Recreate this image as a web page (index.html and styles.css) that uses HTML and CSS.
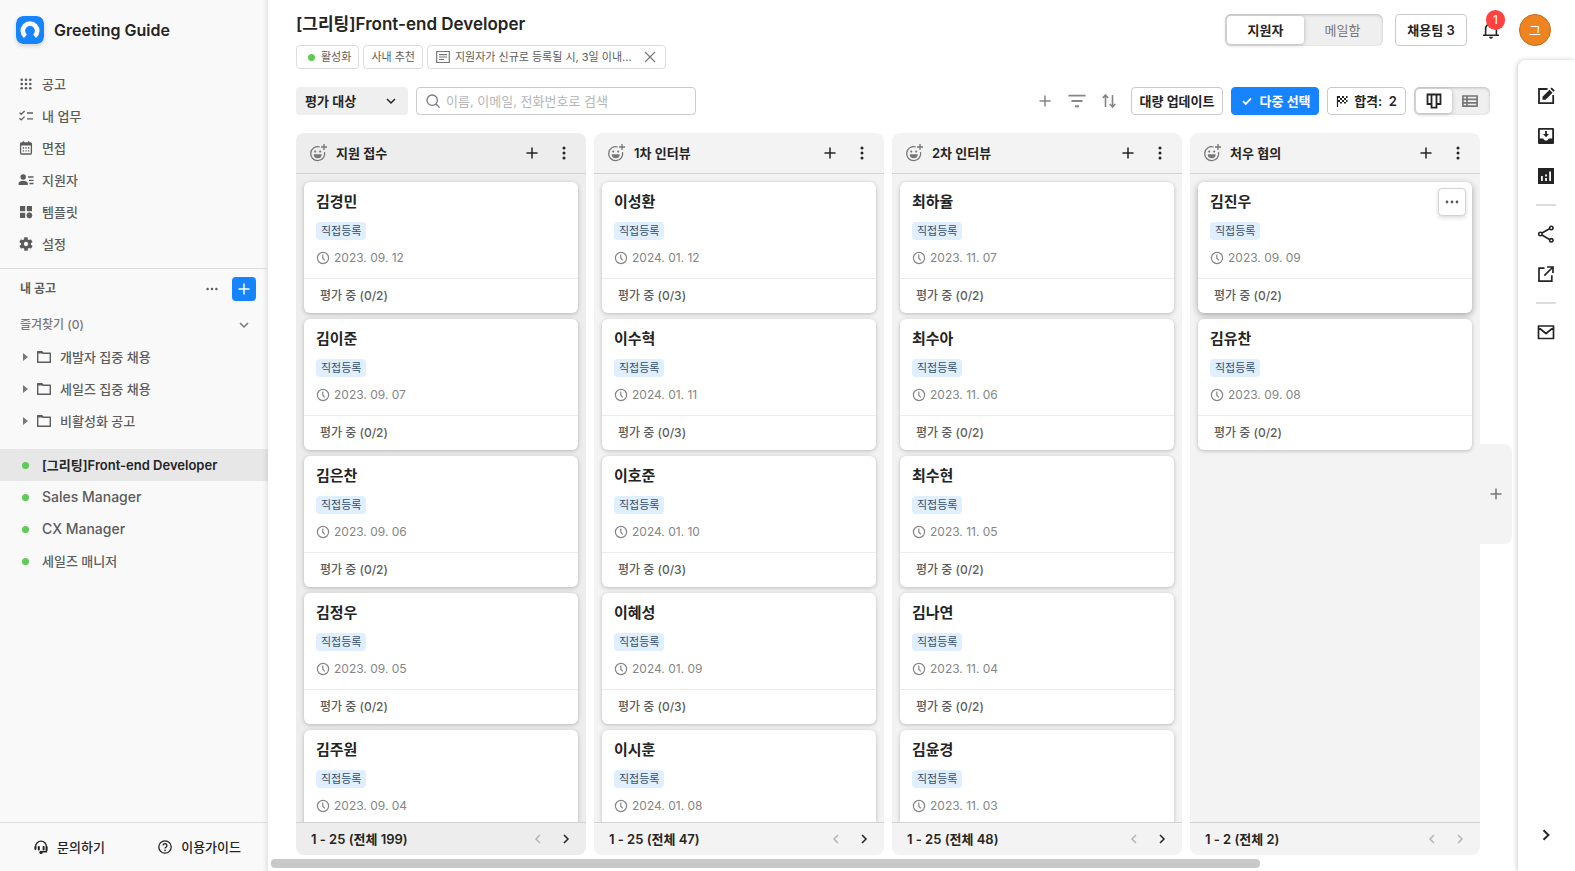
FILE: index.html
```html
<!DOCTYPE html>
<html lang="ko">
<head>
<meta charset="utf-8">
<meta name="viewport" content="width=device-width, initial-scale=1">
<title>[그리팅]Front-end Developer</title>
<link rel="stylesheet" href="styles.css">
</head>
<body>
<svg class="sprite" aria-hidden="true">
  <symbol id="i-plus" viewBox="0 0 16 16"><path d="M8 2.5v11M2.5 8h11" fill="none" stroke="currentColor" stroke-width="1.5"/></symbol>
  <symbol id="i-more" viewBox="0 0 16 16"><g fill="currentColor"><circle cx="3" cy="8" r="1.4"/><circle cx="8" cy="8" r="1.4"/><circle cx="13" cy="8" r="1.4"/></g></symbol>
  <symbol id="i-kebab" viewBox="0 0 16 16"><g fill="currentColor"><circle cx="8" cy="3" r="1.5"/><circle cx="8" cy="8" r="1.5"/><circle cx="8" cy="13" r="1.5"/></g></symbol>
  <symbol id="i-down" viewBox="0 0 16 16"><path d="M4 6l4 4 4-4" fill="none" stroke="currentColor" stroke-width="1.5"/></symbol>
  <symbol id="i-left" viewBox="0 0 16 16"><path d="M10 4L6 8l4 4" fill="none" stroke="currentColor" stroke-width="1.5"/></symbol>
  <symbol id="i-right" viewBox="0 0 16 16"><path d="M6 4l4 4-4 4" fill="none" stroke="currentColor" stroke-width="1.5"/></symbol>
  <symbol id="i-folder" viewBox="0 0 16 16"><path d="M1.7 13.3V2.7h4.1l1.4 1.5h7.1v9.1z" fill="none" stroke="currentColor" stroke-width="1.4" stroke-linejoin="round"/><path d="M1.5 2.5h4.6l1.5 2H1.5z" fill="currentColor"/></symbol>
  <symbol id="i-clock" viewBox="0 0 16 16"><g fill="none" stroke="currentColor" stroke-width="1.2"><circle cx="8" cy="8" r="5.6"/><path d="M7.8 4.6v3.6l2 2.2"/></g></symbol>
  <symbol id="i-smile" viewBox="0 0 20 20"><g fill="none" stroke="currentColor" stroke-width="1.3"><path d="M10.800 4A7 7 0 1 0 15.500 9"/><path d="M15 1v6M12 4h6"/></g><circle cx="6.2" cy="8.600" r="1.1" fill="currentColor"/><circle cx="11.200" cy="8.600" r="1.1" fill="currentColor"/><path d="M4.700 11.300h8a4 4 0 0 1-8 0z" fill="currentColor"/></symbol>
</svg>

<div class="app">
  <aside class="sidebar">
    <div class="brand">
      <svg class="brand-logo" viewBox="0 0 28 28" aria-hidden="true"><rect width="28" height="28" rx="7" fill="#1784ff"/><path d="M9.4 20.3A7.2 7.2 0 1 1 18.6 20.3" fill="none" stroke="#fff" stroke-width="4.6"/></svg>
      <span>Greeting Guide</span>
    </div>
    <nav class="menu">
      <a href="#"><svg class="icon" viewBox="0 0 16 16"><g fill="currentColor"><circle cx="3.7" cy="3.7" r="1.3"/><circle cx="8" cy="3.7" r="1.3"/><circle cx="12.3" cy="3.7" r="1.3"/><circle cx="3.7" cy="8" r="1.3"/><circle cx="8" cy="8" r="1.3"/><circle cx="12.3" cy="8" r="1.3"/><circle cx="3.7" cy="12.3" r="1.3"/><circle cx="8" cy="12.3" r="1.3"/><circle cx="12.3" cy="12.3" r="1.3"/></g></svg>공고</a>
      <a href="#"><svg class="icon" viewBox="0 0 16 16"><path d="M1.5 4.6l1.7 1.7L6.6 3M1.5 10.2l1.7 1.7 3.4-3.3M9 5h6M9 10.8h6" fill="none" stroke="currentColor" stroke-width="1.3"/></svg>내 업무</a>
      <a href="#"><svg class="icon" viewBox="0 0 16 16"><rect x="2.6" y="3" width="10.8" height="11" rx="1" fill="none" stroke="currentColor" stroke-width="1.3"/><path d="M2.5 3h11v2.6h-11zM4.6 1.2h1.5V3H4.6zM9.9 1.2h1.5V3H9.9z" fill="currentColor"/><path d="M4.8 8h6.6M4.8 10.8h6.6" stroke="currentColor" stroke-width="1.3" stroke-dasharray="1.3 1.3"/></svg>면접</a>
      <a href="#"><svg class="icon" viewBox="0 0 16 16"><circle cx="5.2" cy="5" r="2.7" fill="currentColor"/><path d="M.6 13v-1.5c0-1.8 2-2.8 4.6-2.8s4.6 1 4.6 2.8V13z" fill="currentColor"/><path d="M10 5h5.5M11 8.3h4.5M11.5 11.5h4" stroke="currentColor" stroke-width="1.3"/></svg>지원자</a>
      <a href="#"><svg class="icon" viewBox="0 0 16 16"><g fill="currentColor"><rect x="2" y="2" width="5.2" height="5.2"/><rect x="8.8" y="2" width="5.2" height="5.2"/><rect x="2" y="8.8" width="5.2" height="5.2"/><path d="M11.4 8.3l2.2 1 .7 2.1-.7 2.1-2.2 1-2.2-1-.7-2.1.7-2.1z"/></g></svg>템플릿</a>
      <a href="#"><svg class="icon" viewBox="0 0 24 24"><path fill="currentColor" d="M19.4 13c.04-.3.1-.6.1-1s0-.7-.1-1l2.1-1.6c.2-.2.3-.4.1-.7l-2-3.4c-.1-.2-.4-.3-.6-.2l-2.5 1c-.5-.4-1.1-.7-1.7-1L14.400 2.500c0-.3-.2-.5-.5-.5h-4c-.2 0-.4.200-.5.400L9 5.100c-.6.300-1.200.600-1.700 1l-2.500-1c-.2-.1-.5 0-.6.200l-2 3.400c-.1.300 0 .500.100.700L4.500 11c0 .300-.1.600-.1 1s0 .700.100 1l-2.100 1.600c-.2.200-.3.400-.1.700l2 3.400c.1.200.4.300.6.200l2.500-1c.5.400 1.100.7 1.700 1l.4 2.700c0 .2.200.4.500.4h4c.2 0 .4-.2.500-.4l.4-2.700c.6-.3 1.200-.6 1.700-1l2.500 1c.2.100.5 0 .6-.2l2-3.400c.1-.3 0-.5-.1-.7zM12 15.200a3.200 3.200 0 1 1 0-6.400 3.200 3.200 0 0 1 0 6.400z"/></svg>설정</a>
    </nav>
    <section class="postings">
      <div class="postings-head">
        <h2>내 공고</h2>
        <button class="ghost" aria-label="더보기"><svg class="icon"><use href="#i-more"/></svg></button>
        <button class="add" aria-label="공고 추가"><svg class="icon"><use href="#i-plus"/></svg></button>
      </div>
      <button class="favorites"><span>즐겨찾기 (0)</span><svg class="icon"><use href="#i-down"/></svg></button>
      <div class="folders">
        <a href="#"><i class="caret"></i><svg class="icon"><use href="#i-folder"/></svg>개발자 집중 채용</a>
        <a href="#"><i class="caret"></i><svg class="icon"><use href="#i-folder"/></svg>세일즈 집중 채용</a>
        <a href="#"><i class="caret"></i><svg class="icon"><use href="#i-folder"/></svg>비활성화 공고</a>
      </div>
      <div class="jobs">
        <a href="#" class="active"><i class="dot"></i>[그리팅]Front-end Developer</a>
        <a href="#"><i class="dot"></i>Sales Manager</a>
        <a href="#"><i class="dot"></i>CX Manager</a>
        <a href="#" class="ko"><i class="dot"></i>세일즈 매니저</a>
      </div>
    </section>
    <footer class="side-foot">
      <a href="#"><svg class="icon" viewBox="0 0 16 16"><g fill="none" stroke="currentColor" stroke-width="1.4"><path d="M2.600 8.500V7.500a5.400 5.400 0 0 1 10.800 0v5.300H9"/><circle cx="8" cy="13.400" r="1" fill="currentColor"/></g><rect x="1.400" y="7" width="2" height="4" rx="1" fill="currentColor"/><rect x="4.800" y="7" width="2" height="4.500" rx=".8" fill="currentColor"/><rect x="9.600" y="7" width="2" height="4.500" rx=".8" fill="currentColor"/><rect x="12.800" y="7" width="1.800" height="5" rx=".8" fill="currentColor"/></svg>문의하기</a>
      <a href="#"><svg class="icon" viewBox="0 0 16 16"><g fill="none" stroke="currentColor" stroke-width="1.3"><circle cx="8" cy="8" r="6.200"/><path d="M6.100 6.500a1.900 1.900 0 1 1 2.900 1.600c-.7.400-1 .7-1 1.500"/></g><circle cx="8" cy="11.400" r=".8" fill="currentColor"/></svg>이용가이드</a>
    </footer>
  </aside>

  <div class="page">
    <header class="heading">
      <h1>[그리팅]Front-end Developer</h1>
      <div class="tags">
        <span class="tag tag-state"><i class="dot"></i>활성화</span>
        <span class="tag">사내 추천</span>
        <span class="tag tag-note"><svg class="icon" viewBox="0 0 16 16"><path d="M1.700 2.500h12.600v11H1.700zM4 5.600h8M4 8h8M4 10.500h5" fill="none" stroke="currentColor" stroke-width="1.200"/></svg><span>지원자가 신규로 등록될 시, 3일 이내...</span><button aria-label="닫기"><svg class="icon" viewBox="0 0 16 16"><path d="M3 3l10 10M13 3L3 13" stroke="currentColor" stroke-width="1.200"/></svg></button></span>
      </div>
    </header>

    <div class="account">
      <div class="switch">
        <button class="on">지원자</button>
        <button>메일함</button>
      </div>
      <button class="btn btn-team">채용팀 3</button>
      <button class="bell" aria-label="알림"><svg class="icon-l" viewBox="0 0 20 20"><path d="M2 15.200h16M4.600 15V9a5.400 5.400 0 0 1 10.800 0v6M10 3.700V2" fill="none" stroke="currentColor" stroke-width="1.600"/><path d="M8 16.800h4a2 2 0 0 1-4 0z" fill="currentColor"/></svg><span class="badge">1</span></button>
      <button class="avatar">그</button>
    </div>

    <main class="main">
      <div class="toolbar">
        <button class="filter">평가 대상<svg class="icon"><use href="#i-down"/></svg></button>
        <label class="search"><svg class="icon" viewBox="0 0 16 16"><g fill="none" stroke="currentColor" stroke-width="1.300"><circle cx="7.200" cy="7.200" r="5.200"/><path d="M11 11l3.600 3.600"/></g></svg><input type="text" aria-label="검색" placeholder="이름, 이메일, 전화번호로 검색"></label>
        <div class="tools">
          <button aria-label="추가"><svg class="icon"><use href="#i-plus"/></svg></button>
          <button aria-label="필터"><svg class="icon-l" viewBox="0 0 20 20"><path d="M1.500 4.700h17M4.500 10h11" stroke="currentColor" stroke-width="1.800"/><path d="M8 15.300h4" stroke="currentColor" stroke-width="2"/></svg></button>
          <button aria-label="정렬"><svg class="icon" viewBox="0 0 16 16"><path d="M4.500 14V2M1.800 5l2.700-3 2.700 3M11.500 2v12M8.800 11l2.700 3 2.700-3" fill="none" stroke="currentColor" stroke-width="1.600"/></svg></button>
        </div>
        <button class="btn btn-bulk">대량 업데이트</button>
        <button class="btn btn-primary"><svg class="icon" viewBox="0 0 16 16"><path d="M4 8.200l2.800 2.700L12 5.300" fill="none" stroke="currentColor" stroke-width="1.800"/></svg>다중 선택</button>
        <button class="btn btn-pass"><svg class="icon-s" viewBox="0 0 12 12"><path d="M1.500 1v11" stroke="currentColor" stroke-width="1.200"/><g fill="currentColor"><path d="M2 1h2v2H2zM6 1h2v2H6zM10 1h1.500v2H10zM4 3h2v2H4zM8 3h2v2H8zM2 5h2v2H2zM6 5h2v2H6zM10 5h1.500v2H10zM4 7h2v1.500H4zM8 7h2v1.500H8z"/></g></svg>합격: &nbsp;2</button>
        <div class="switch switch-view">
          <button class="on" aria-label="보드"><svg class="icon" viewBox="0 0 16 16"><path d="M1.500 1.500h13v9.500h-4v3.600h-5V11h-4zM5.500 1.500V12M10.500 1.500V12" fill="none" stroke="currentColor" stroke-width="1.800"/></svg></button>
          <button aria-label="목록"><svg class="icon-m" viewBox="0 0 18 16"><path d="M1.900 3h14.200v10.200H1.900zM1.900 6.400h14.200M1.900 9.800h14.200M6 3v10.200" fill="none" stroke="currentColor" stroke-width="1.700"/></svg></button>
        </div>
      </div>

      <div class="board">
        <section class="column column-hot">
          <header><svg class="icon-l"><use href="#i-smile"/></svg><h3>지원 접수</h3><button aria-label="추가"><svg class="icon"><use href="#i-plus"/></svg></button><button aria-label="메뉴"><svg class="icon"><use href="#i-kebab"/></svg></button></header>
          <div class="cards">
            <article class="card"><h4>김경민</h4><span class="chip">직접등록</span><time><svg class="icon"><use href="#i-clock"/></svg>2023. 09. 12</time><p>평가 중 (0/2)</p></article>
            <article class="card"><h4>김이준</h4><span class="chip">직접등록</span><time><svg class="icon"><use href="#i-clock"/></svg>2023. 09. 07</time><p>평가 중 (0/2)</p></article>
            <article class="card"><h4>김은찬</h4><span class="chip">직접등록</span><time><svg class="icon"><use href="#i-clock"/></svg>2023. 09. 06</time><p>평가 중 (0/2)</p></article>
            <article class="card"><h4>김정우</h4><span class="chip">직접등록</span><time><svg class="icon"><use href="#i-clock"/></svg>2023. 09. 05</time><p>평가 중 (0/2)</p></article>
            <article class="card"><h4>김주원</h4><span class="chip">직접등록</span><time><svg class="icon"><use href="#i-clock"/></svg>2023. 09. 04</time></article>
          </div>
          <footer><span>1 - 25 (전체 199)</span><button disabled aria-label="이전"><svg class="icon"><use href="#i-left"/></svg></button><button aria-label="다음"><svg class="icon"><use href="#i-right"/></svg></button></footer>
        </section>

        <section class="column">
          <header><svg class="icon-l"><use href="#i-smile"/></svg><h3>1차 인터뷰</h3><button aria-label="추가"><svg class="icon"><use href="#i-plus"/></svg></button><button aria-label="메뉴"><svg class="icon"><use href="#i-kebab"/></svg></button></header>
          <div class="cards">
            <article class="card"><h4>이성환</h4><span class="chip">직접등록</span><time><svg class="icon"><use href="#i-clock"/></svg>2024. 01. 12</time><p>평가 중 (0/3)</p></article>
            <article class="card"><h4>이수혁</h4><span class="chip">직접등록</span><time><svg class="icon"><use href="#i-clock"/></svg>2024. 01. 11</time><p>평가 중 (0/3)</p></article>
            <article class="card"><h4>이호준</h4><span class="chip">직접등록</span><time><svg class="icon"><use href="#i-clock"/></svg>2024. 01. 10</time><p>평가 중 (0/3)</p></article>
            <article class="card"><h4>이혜성</h4><span class="chip">직접등록</span><time><svg class="icon"><use href="#i-clock"/></svg>2024. 01. 09</time><p>평가 중 (0/3)</p></article>
            <article class="card"><h4>이시훈</h4><span class="chip">직접등록</span><time><svg class="icon"><use href="#i-clock"/></svg>2024. 01. 08</time></article>
          </div>
          <footer><span>1 - 25 (전체 47)</span><button disabled aria-label="이전"><svg class="icon"><use href="#i-left"/></svg></button><button aria-label="다음"><svg class="icon"><use href="#i-right"/></svg></button></footer>
        </section>

        <section class="column">
          <header><svg class="icon-l"><use href="#i-smile"/></svg><h3>2차 인터뷰</h3><button aria-label="추가"><svg class="icon"><use href="#i-plus"/></svg></button><button aria-label="메뉴"><svg class="icon"><use href="#i-kebab"/></svg></button></header>
          <div class="cards">
            <article class="card"><h4>최하율</h4><span class="chip">직접등록</span><time><svg class="icon"><use href="#i-clock"/></svg>2023. 11. 07</time><p>평가 중 (0/2)</p></article>
            <article class="card"><h4>최수아</h4><span class="chip">직접등록</span><time><svg class="icon"><use href="#i-clock"/></svg>2023. 11. 06</time><p>평가 중 (0/2)</p></article>
            <article class="card"><h4>최수현</h4><span class="chip">직접등록</span><time><svg class="icon"><use href="#i-clock"/></svg>2023. 11. 05</time><p>평가 중 (0/2)</p></article>
            <article class="card"><h4>김나연</h4><span class="chip">직접등록</span><time><svg class="icon"><use href="#i-clock"/></svg>2023. 11. 04</time><p>평가 중 (0/2)</p></article>
            <article class="card"><h4>김윤경</h4><span class="chip">직접등록</span><time><svg class="icon"><use href="#i-clock"/></svg>2023. 11. 03</time></article>
          </div>
          <footer><span>1 - 25 (전체 48)</span><button disabled aria-label="이전"><svg class="icon"><use href="#i-left"/></svg></button><button aria-label="다음"><svg class="icon"><use href="#i-right"/></svg></button></footer>
        </section>

        <section class="column">
          <header><svg class="icon-l"><use href="#i-smile"/></svg><h3>처우 협의</h3><button aria-label="추가"><svg class="icon"><use href="#i-plus"/></svg></button><button aria-label="메뉴"><svg class="icon"><use href="#i-kebab"/></svg></button></header>
          <div class="cards">
            <article class="card card-hover"><h4>김진우</h4><span class="chip">직접등록</span><time><svg class="icon"><use href="#i-clock"/></svg>2023. 09. 09</time><p>평가 중 (0/2)</p><button class="card-menu" aria-label="더보기"><svg class="icon"><use href="#i-more"/></svg></button></article>
            <article class="card"><h4>김유찬</h4><span class="chip">직접등록</span><time><svg class="icon"><use href="#i-clock"/></svg>2023. 09. 08</time><p>평가 중 (0/2)</p></article>
          </div>
          <footer><span>1 - 2 (전체 2)</span><button disabled aria-label="이전"><svg class="icon"><use href="#i-left"/></svg></button><button disabled aria-label="다음"><svg class="icon"><use href="#i-right"/></svg></button></footer>
        </section>
        <button class="add-column" aria-label="단계 추가"><svg class="icon"><use href="#i-plus"/></svg></button>
      </div>
      <div class="scrollbar"><div class="thumb"></div></div>
    </main>

    <aside class="rail">
      <button aria-label="수정"><svg class="icon-l" viewBox="0 0 20 20"><path d="M11.500 3H3v14.200h14.200V9" fill="none" stroke="currentColor" stroke-width="1.800"/><path d="M6.500 13.700v-3l7-7 3 3-7 7zM14.400 2.800l1.400-1.400 3 3-1.400 1.400z" fill="currentColor"/></svg></button>
      <button aria-label="보관함"><svg class="icon-l" viewBox="0 0 20 20"><path fill="currentColor" fill-rule="evenodd" d="M3 2h14a1 1 0 0 1 1 1v14a1 1 0 0 1-1 1H3a1 1 0 0 1-1-1V3a1 1 0 0 1 1-1zm.8 1.800v8.700h3.400a2.900 2.900 0 0 0 5.600 0h3.400V3.800zM9.100 5h1.800v3H13l-3 3.300L7 8h2.100z"/></svg></button>
      <button aria-label="통계"><svg class="icon-l" viewBox="0 0 20 20"><path fill="currentColor" fill-rule="evenodd" d="M2 2h16v16H2zM5 10v5h1.800v-5zm4.100-1.500v2h1.800v-2zm0 3.500v3h1.800v-3zm4.100-6.500V15H15V5.500z"/></svg></button>
      <hr>
      <button aria-label="공유"><svg class="icon-l" viewBox="0 0 20 20"><g fill="none" stroke="currentColor" stroke-width="1.600"><path d="M6 9l7.500-4.300M6 11l7.500 4.500"/><circle cx="4.400" cy="10" r="1.700"/><circle cx="15.300" cy="4" r="1.700"/><circle cx="15.300" cy="16.300" r="1.700"/></g></svg></button>
      <button aria-label="새 창"><svg class="icon-l" viewBox="0 0 20 20"><path d="M8.500 4.200H3v13h12.800v-6M11 3h6v6M16.500 3.500L8.300 11.700" fill="none" stroke="currentColor" stroke-width="1.700"/></svg></button>
      <hr>
      <button aria-label="메일"><svg class="icon-l" viewBox="0 0 20 20"><path d="M2.500 4h15v12.500h-15zM2.500 5.500l7.500 6 7.500-6" fill="none" stroke="currentColor" stroke-width="1.700" stroke-linejoin="round"/></svg></button>
      <button class="rail-toggle" aria-label="펼치기"><svg class="icon-l" viewBox="0 0 20 20"><path d="M7.500 5.200l5 4.800-5 4.800" fill="none" stroke="currentColor" stroke-width="1.900"/></svg></button>
    </aside>
  </div>
</div>
</body>
</html>
```

FILE: styles.css
```css
* { box-sizing: border-box; margin: 0; }

body {
  font-family: Inter, "Noto Sans CJK KR", sans-serif;
  font-size: 13px;
  line-height: 20px;
  color: #242424;
  background: #fff;
}

button, input {
  font: inherit;
  color: inherit;
  padding: 0;
  border: 0;
  background: none;
}

a { color: inherit; text-decoration: none; }
h1, h2, h3, h4 { font-size: inherit; font-weight: 600; }

button {
  display: inline-flex;
  align-items: center;
  justify-content: center;
  white-space: nowrap;
}

.sprite { position: absolute; width: 0; height: 0; }
.icon { width: 16px; height: 16px; flex: none; }
.icon-s { width: 12px; height: 12px; flex: none; }
.icon-m { width: 18px; height: 16px; flex: none; }
.icon-l { width: 20px; height: 20px; flex: none; }
.dot { width: 7px; height: 7px; border-radius: 50%; background: #5ecb55; flex: none; }

.app {
  display: grid;
  grid-template-columns: 268px minmax(0, 1fr);
  height: 100vh;
  overflow: hidden;
}

/* Sidebar */
.sidebar {
  display: flex;
  flex-direction: column;
  background: #f9f9f9;
  color: #5c5c5c;
  font-weight: 500;
  box-shadow: inset -6px 0 6px -6px rgba(0, 0, 0, .16);
}
.brand {
  display: flex;
  align-items: center;
  gap: 10px;
  padding: 16px 16px 24px;
  font-size: 16px;
  font-weight: 600;
  color: #242424;
}
.brand-logo {
  width: 28px;
  height: 28px;
  border-radius: 7px;
  box-shadow: 0 2px 4px rgba(0, 0, 0, .16);
}
.menu { padding-bottom: 8px; border-bottom: 1px solid #dcdcdc; }
.menu a, .folders a, .jobs a {
  display: flex;
  align-items: center;
  height: 32px;
}
.menu a { gap: 8px; padding-left: 18px; }
.postings { flex: 1; }
.postings-head {
  display: flex;
  align-items: center;
  height: 40px;
  padding: 0 12px 0 20px;
}
.postings-head h2 { flex: 1; font-size: 12px; }
.ghost { width: 24px; height: 24px; margin-right: 8px; }
.ghost .icon { padding: 1px; }
.add { width: 24px; height: 24px; border-radius: 4px; background: #1784ff; color: #fff; }
.favorites {
  display: flex;
  justify-content: space-between;
  width: 100%;
  height: 32px;
  padding: 0 16px 0 20px;
  font-size: 12px;
  color: #777;
}
.folders { padding-bottom: 12px; }
.folders a { gap: 8px; padding-left: 23px; }
.caret {
  border: 4px solid transparent;
  border-left: 5px solid #777;
  border-right: 0;
}
.jobs { font-size: 14px; }
.jobs a { gap: 13px; padding-left: 22px; }
.jobs .ko { font-size: 13px; }
.jobs .active { background: rgba(0, 0, 0, .07); color: #242424; font-size: 13px; font-weight: 600; }
.side-foot {
  display: flex;
  justify-content: space-between;
  height: 49px;
  padding: 0 27px 0 33px;
  border-top: 1px solid #dcdcdc;
  color: #242424;
}
.side-foot a { display: flex; align-items: center; gap: 8px; }

/* Page frame */
.page {
  display: grid;
  grid-template-columns: minmax(0, 1fr) auto 57px;
  grid-template-rows: 60px auto minmax(0, 1fr);
  min-height: 0;
}
.heading { grid-area: 1 / 1 / 3 / 2; padding: 10px 0 18px 28px; }
.heading h1 { font-size: 17px; line-height: 28px; }
.tags { display: flex; gap: 4px; padding-top: 7px; }
.tag {
  display: flex;
  align-items: center;
  height: 24px;
  padding: 0 7px;
  border: 1px solid #dcdcdc;
  border-radius: 4px;
  font-size: 11px;
  color: #5c5c5c;
  white-space: nowrap;
}
.tag-state { gap: 6px; padding-left: 11px; }
.tag-note { gap: 4px; }
.tag-note button { margin-left: 6px; }
.tag .icon { color: #777; }

.account {
  grid-area: 1 / 2 / 2 / 4;
  display: flex;
  align-items: flex-start;
  padding: 14px 24px 0 0;
}
.switch {
  display: flex;
  width: 158px;
  height: 32px;
  padding: 2px;
  border-radius: 6px;
  background: #efefef;
  box-shadow: inset 0 1px 3px rgba(0, 0, 0, .22);
  color: #777;
}
.switch button { flex: 1; border-radius: 4px; }
.switch .on {
  background: #fff;
  color: #242424;
  font-weight: 600;
  box-shadow: 0 1px 4px rgba(0, 0, 0, .25);
}
.btn {
  height: 28px;
  padding: 0 7px;
  border: 1px solid #cacaca;
  border-radius: 4px;
  background: #fff;
  font-weight: 600;
}
.btn-team { width: 72px; height: 32px; margin-left: 12px; }
.bell { position: relative; width: 32px; height: 32px; margin-left: 8px; }
.badge {
  position: absolute;
  top: -4px;
  right: 2px;
  width: 19px;
  height: 20px;
  border-radius: 10px;
  background: #ff4242;
  color: #fff;
  font-size: 12px;
}
.avatar {
  width: 32px;
  height: 32px;
  margin-left: 12px;
  border: 1px solid #c76a1b;
  border-radius: 50%;
  background: #ee8321;
  color: #fff;
}

/* Toolbar */
.main {
  grid-area: 3 / 1 / 4 / 3;
  display: flex;
  flex-direction: column;
  min-width: 0;
}
.toolbar { display: flex; gap: 8px; padding: 0 28px 18px; }
.filter {
  justify-content: space-between;
  width: 112px;
  height: 28px;
  padding: 0 9px;
  border-radius: 4px;
  background: #efefef;
  font-weight: 600;
}
.search {
  display: flex;
  align-items: center;
  gap: 5px;
  width: 280px;
  padding: 0 8px;
  border: 1px solid #cacaca;
  border-radius: 4px;
  color: #777;
}
.search input { flex: 1; min-width: 0; outline: 0; }
.search input::placeholder { color: #b5b5b5; opacity: 1; }
.tools { display: flex; gap: 8px; margin-left: auto; padding-right: 2px; color: #858585; }
.tools button { width: 24px; }
.btn-bulk { width: 92px; }
.btn-primary { gap: 4px; width: 88px; border-color: #1784ff; background: #1784ff; color: #fff; }
.btn-pass { gap: 6px; width: 79px; }
.switch-view { width: 76px; height: 28px; }

/* Board */
.board {
  flex: 1;
  display: flex;
  gap: 8px;
  min-height: 0;
  padding: 0 6px 0 28px;
}
.column {
  flex: 1 1 0;
  display: flex;
  flex-direction: column;
  min-width: 0;
  border-radius: 8px;
  background: #f3f3f3;
}
.column-hot { background: #ededed; }
.column header {
  display: flex;
  align-items: center;
  height: 41px;
  padding: 0 10px 0 13px;
  border-bottom: 1px solid #d2d2d2;
}
.column header > .icon-l { color: #777; }
.column h3 { flex: 1; padding-left: 7px; }
.column header button { width: 24px; height: 24px; margin-left: 8px; }
.cards {
  flex: 1;
  display: flex;
  flex-direction: column;
  gap: 6px;
  min-height: 0;
  padding: 8px 8px 0;
  overflow: hidden;
}
.card {
  position: relative;
  flex: none;
  display: flex;
  flex-direction: column;
  align-items: flex-start;
  min-height: 131px;
  border-radius: 6px;
  background: #fff;
  box-shadow: 0 1px 4px rgba(0, 0, 0, .24);
}
.card-hover { box-shadow: 0 2px 7px rgba(0, 0, 0, .34); }
.card h4 { padding: 8px 12px 0; font-size: 15px; line-height: 24px; font-weight: 700; }
.chip {
  margin: 8px 12px 0;
  padding: 0 5px;
  border-radius: 4px;
  background: #e0efff;
  color: #344e6b;
  font-size: 11px;
  line-height: 18px;
}
.card time {
  display: flex;
  align-items: center;
  gap: 3px;
  margin: 8px 0 10px 11px;
  font-size: 12px;
  color: #858585;
}
.card p {
  width: 100%;
  padding: 7px 16px;
  border-top: 1px solid #ebebeb;
  font-size: 12px;
  font-weight: 500;
  color: #5c5c5c;
}
.card-menu {
  position: absolute;
  top: 6px;
  right: 6px;
  width: 28px;
  height: 28px;
  border: 1px solid #d2d2d2;
  border-radius: 4px;
  background: #fff;
  color: #5c5c5c;
  box-shadow: 0 2px 4px rgba(0, 0, 0, .14);
}
.column footer {
  display: flex;
  align-items: center;
  height: 33px;
  padding: 0 8px 0 15px;
  border-top: 1px solid #d2d2d2;
  font-weight: 600;
}
.column footer span { flex: 1; }
.column footer button { width: 24px; height: 24px; margin-left: 4px; }
.column footer button:disabled { color: #b5b5b5; }
.add-column {
  align-self: center;
  width: 32px;
  height: 100px;
  margin-left: -8px;
  border-radius: 0 8px 8px 0;
  background: #f3f3f3;
  color: #777;
}
.scrollbar { padding: 4px 3px 3px; }
.thumb { width: 79.5%; height: 9px; border-radius: 4px; background: #c9c9c9; }

/* Right rail */
.rail {
  grid-area: 2 / 3 / 4 / 4;
  display: flex;
  flex-direction: column;
  align-items: center;
  gap: 8px;
  padding: 20px 2px 20px 0;
  border-radius: 8px 0 0;
  background: #fff;
  box-shadow: -1px 0 5px rgba(0, 0, 0, .2);
}
.rail button { width: 32px; height: 32px; }
.rail hr { width: 20px; height: 2px; margin: 4px 0; border: 0; background: #dcdcdc; }
.rail .rail-toggle { margin-top: auto; }
```
